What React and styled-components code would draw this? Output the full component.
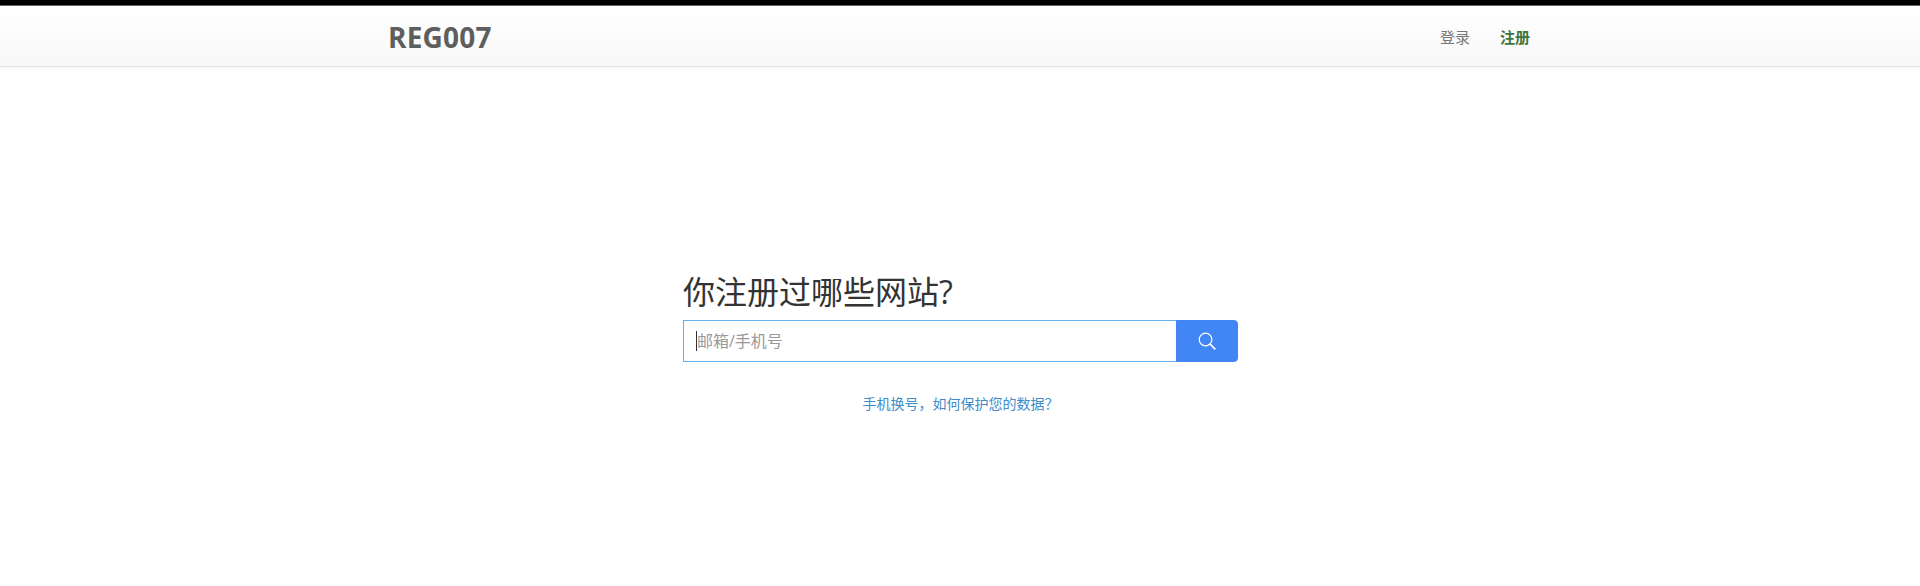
import React from 'react';
import styled, {createGlobalStyle} from 'styled-components';

const GlobalStyle = createGlobalStyle`
    html, body {
        margin: 0;
        padding: 0;
        background-color: #FFFFFF;
        font-family: 'Open Sans', 'Noto Sans CJK SC', sans-serif;
    }
`

const Page = styled.div`
    height: 586px;
    overflow: hidden;
    border-top: 5px solid #000000;
    box-sizing: border-box;
`

const NavBar = styled.header`
    height: 62px;
    box-sizing: border-box;
    background-image: linear-gradient(to bottom, #FFFFFF 0%, #F8F8F8 100%);
    border-top: 1px solid #666666;
    border-bottom: 1px solid #E4E4E4;
    box-shadow: 0 1px 4px rgba(0, 0, 0, 0.06);
`

const NavInner = styled.div`
    width: 1170px;
    height: 100%;
    margin: 0 auto;
    padding: 0 0 0 13px;
    box-sizing: border-box;
    display: flex;
    align-items: center;
    justify-content: space-between;
`

const Brand = styled.a`
    font-size: 28px;
    font-weight: 700;
    letter-spacing: 0.2px;
    color: #5E5E5E;
    position: relative;
    top: 1px;
`

const NavLinks = styled.nav`
    display: flex;
    gap: 30px;
    padding-right: 15px;
`

const NavLink = styled.a`
    font-size: 15px;
    font-weight: ${({$active}) => ($active ? 700 : 400)};
    color: ${({$active}) => ($active ? '#3C763D' : '#777777')};
`

const Main = styled.main`
    width: 555px;
    margin: 0 auto;
    padding: 203px 0 0 1px;
    box-sizing: content-box;
`

const Title = styled.h1`
    margin: 0;
    font-size: 32px;
    line-height: 44px;
    font-weight: 400;
    color: #333333;
`

const SearchRow = styled.form`
    display: flex;
    height: 42px;
    margin: 6px 0 0;
`

const InputWrap = styled.div`
    position: relative;
    flex: 1;
`

const SearchInput = styled.input`
    width: 100%;
    height: 100%;
    box-sizing: border-box;
    padding: 0 13px;
    border: 1px solid #66AFE9;
    border-right: 0;
    outline: none;
    font-size: 16px;
    font-family: inherit;
    color: #555555;

    &::placeholder {
        color: #999999;
        opacity: 1;
    }
`

const Caret = styled.span`
    position: absolute;
    left: 13px;
    top: 11px;
    width: 1px;
    height: 20px;
    background-color: #333333;
`

const SearchButton = styled.button`
    width: 62px;
    padding: 0;
    display: flex;
    align-items: center;
    justify-content: center;
    border: 1px solid #4285F4;
    border-radius: 0 4px 4px 0;
    background-color: #4285F4;
    color: #FFFFFF;
`

const HelpRow = styled.div`
    margin-top: 30px;
    text-align: center;
`

const HelpLink = styled.a`
    font-size: 14px;
    color: #428BCA;
`

const SearchIcon = () => (
    <svg width="18" height="18" viewBox="0 0 16 16" fill="none" stroke="currentColor" strokeWidth="1.1">
        <circle cx="6.7" cy="6.7" r="5.6"/>
        <path d="M10.8 10.8L15 15" strokeWidth="1.5" strokeLinecap="round"/>
    </svg>
)

const App = () => {
    return (
        <Page>
            <GlobalStyle/>
            <NavBar>
                <NavInner>
                    <Brand>REG007</Brand>
                    <NavLinks>
                        <NavLink>登录</NavLink>
                        <NavLink $active>注册</NavLink>
                    </NavLinks>
                </NavInner>
            </NavBar>
            <Main>
                <Title>你注册过哪些网站?</Title>
                <SearchRow>
                    <InputWrap>
                        <SearchInput placeholder="邮箱/手机号"/>
                        <Caret/>
                    </InputWrap>
                    <SearchButton type="button"><SearchIcon/></SearchButton>
                </SearchRow>
                <HelpRow>
                    <HelpLink>{'手机换号\uFF0C如何保护您的数据\uFF1F'}</HelpLink>
                </HelpRow>
            </Main>
        </Page>
    );
}

export default App;
